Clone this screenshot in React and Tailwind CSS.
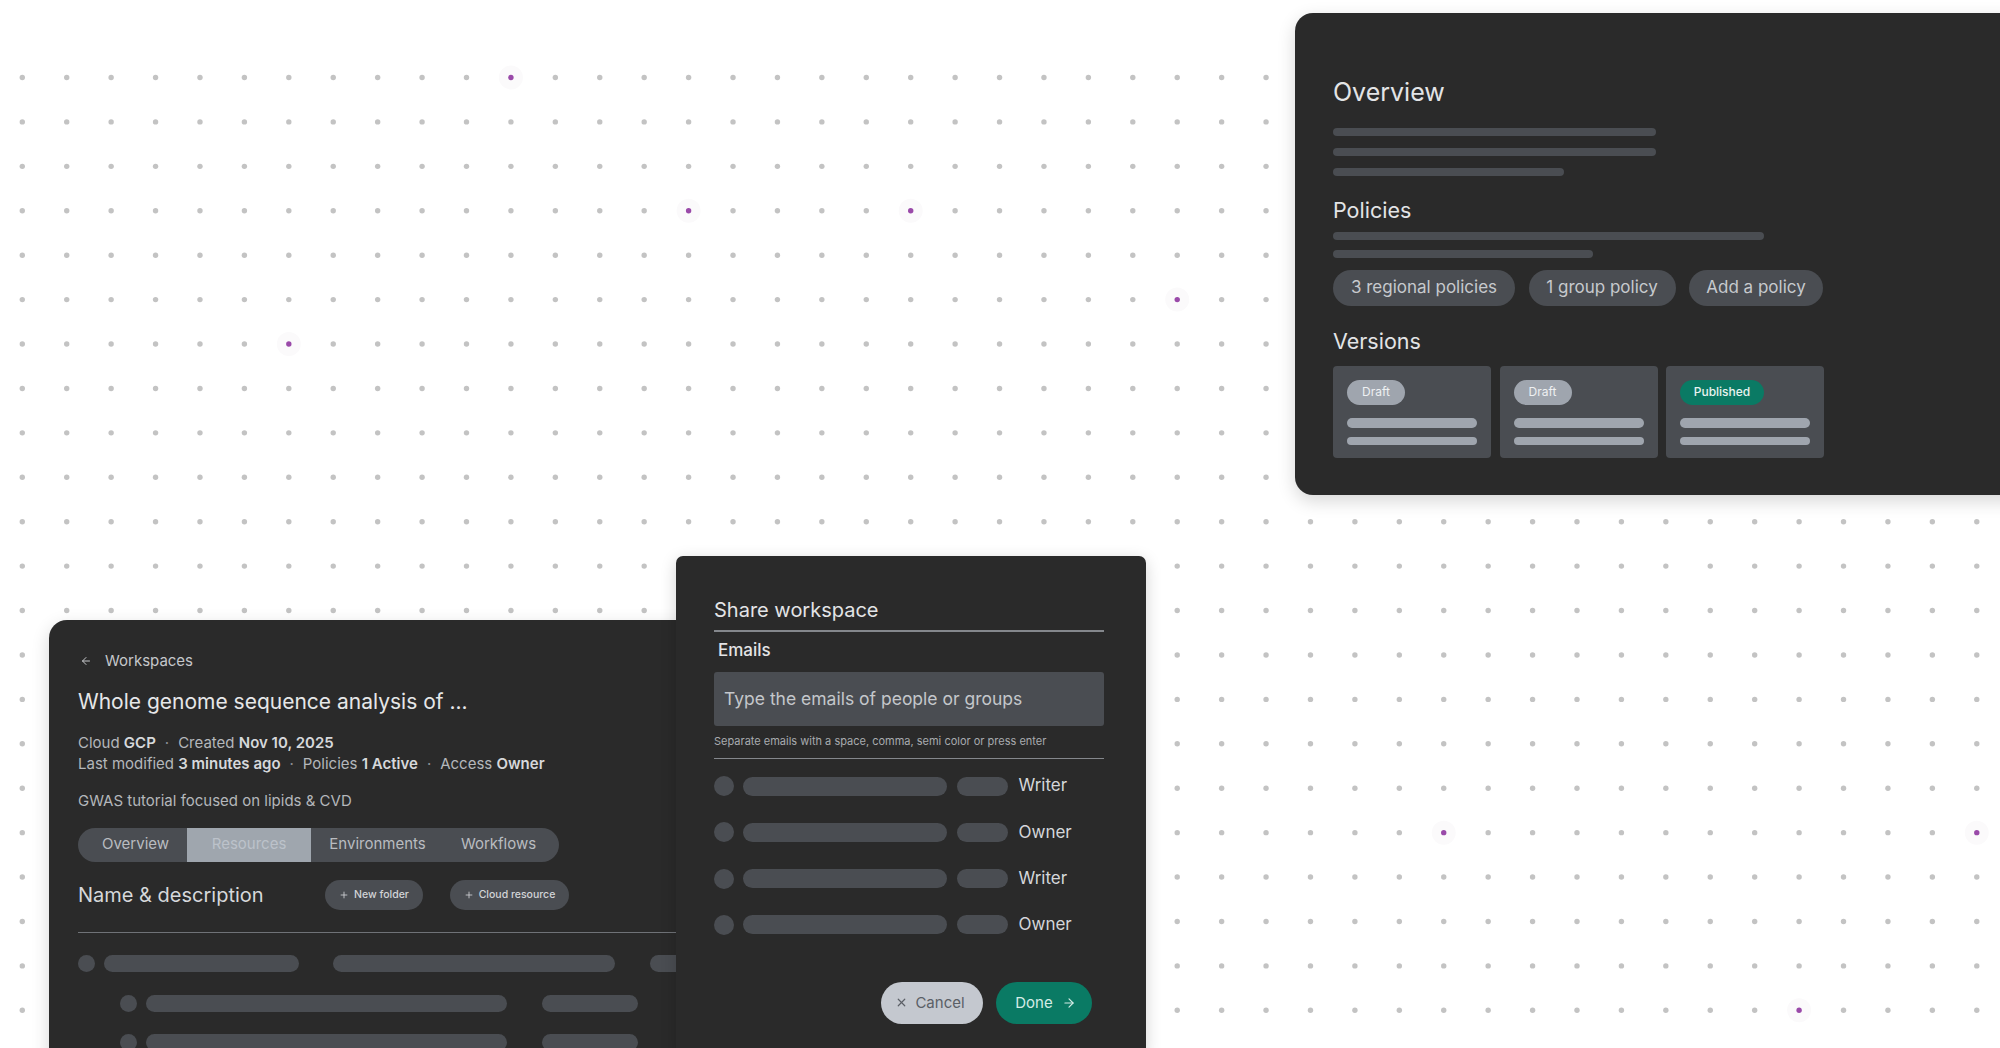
import React from "react";
import { ArrowLeft, ArrowRight, Plus, X } from "lucide-react";

// dot canvas behind the cards
const STEP = 44.42;
const X0 = 22.3;
const Y0 = 77.5;
const HIGHLIGHTS = new Set(["11,0", "15,3", "20,3", "6,6", "26,5", "32,17", "44,17", "40,21"]);

function DotGrid() {
  const dots = [];
  for (let r = 0; r < 22; r++) {
    for (let c = 0; c < 45; c++) {
      const key = `${c},${r}`;
      dots.push({ key, cx: X0 + c * STEP, cy: Y0 + r * STEP, hot: HIGHLIGHTS.has(key) });
    }
  }

  return (
    <svg className="absolute inset-0" width="2000" height="1048" viewBox="0 0 2000 1048">
      {dots
        .filter((d) => d.hot)
        .map((d) => (
          <circle key={"glow" + d.key} cx={d.cx} cy={d.cy} r={12} fill="#fbfafb" />
        ))}
      {dots.map((d) => (
        <circle key={d.key} cx={d.cx} cy={d.cy} r={2.7} fill={d.hot ? "#9a4aa9" : "#c3c3c3"} />
      ))}
    </svg>
  );
}

function VersionCard({ label, published }) {
  return (
    <div className="flex h-[92px] w-[158px] flex-col rounded-[4px] bg-[#4a4d52] px-[14px] pt-[14px]">
      <span
        className={
          published
            ? "flex h-[25px] w-[84px] items-center justify-center rounded-full bg-[#0a7a64] text-[12px] font-medium text-[#e8f3f0]"
            : "flex h-[25px] w-[58px] items-center justify-center rounded-full bg-[#9fa5ae] text-[12px] text-[#eef0f2]"
        }
      >
        {label}
      </span>
      <div className="mt-[13.5px] h-[10px] w-[130px] rounded-full bg-[#9fa5ae]" />
      <div className="mt-[9px] h-[7.5px] w-[130px] rounded-full bg-[#9fa5ae]" />
    </div>
  );
}

function OverviewPanel() {
  return (
    <section className="absolute left-[1295px] top-[13px] h-[482px] w-[740px] rounded-[18px] bg-[#2a2a2a] pl-[38px] pt-[65px] shadow-[0_6px_18px_rgba(0,0,0,0.16)]">
      <h2 className="text-[25px] leading-[28px] text-[#e3e4e6]">Overview</h2>
      <div className="mt-[22px] flex flex-col gap-[12px]">
        <div className="h-[8px] w-[323px] rounded-full bg-[#4a4d52]" />
        <div className="h-[8px] w-[323px] rounded-full bg-[#4a4d52]" />
        <div className="h-[8px] w-[231px] rounded-full bg-[#4a4d52]" />
      </div>

      <h3 className="mt-[21px] text-[21.5px] leading-[26px] text-[#e3e4e6]">Policies</h3>
      <div className="mt-[9px] flex flex-col gap-[10px]">
        <div className="h-[8px] w-[431px] rounded-full bg-[#4a4d52]" />
        <div className="h-[8px] w-[260px] rounded-full bg-[#4a4d52]" />
      </div>
      <div className="mt-[11.5px] flex gap-[13.5px] text-[17px] text-[#c6c9cd]">
        <span className="flex h-[36px] w-[182px] items-center justify-center rounded-full bg-[#4a4d52]">
          3 regional policies
        </span>
        <span className="flex h-[36px] w-[147px] items-center justify-center rounded-full bg-[#4a4d52]">
          1 group policy
        </span>
        <span className="flex h-[36px] w-[134px] items-center justify-center rounded-full bg-[#4a4d52]">
          Add a policy
        </span>
      </div>

      <h3 className="mt-[22px] text-[21.5px] leading-[26px] text-[#e3e4e6]">Versions</h3>
      <div className="mt-[12px] flex gap-[8.5px]">
        <VersionCard label="Draft" />
        <VersionCard label="Draft" />
        <VersionCard label="Published" published />
      </div>
    </section>
  );
}

function Dot() {
  return <span className="mx-[9px] text-[#8d9095]">·</span>;
}

function WorkspacePanel() {
  return (
    <section className="absolute left-[49px] top-[620px] h-[440px] w-[720px] rounded-tl-[18px] rounded-tr-[18px] bg-[#2a2a2a] pl-[29px] pt-[31px] shadow-[0_6px_18px_rgba(0,0,0,0.16)]">
      <div className="flex h-[20px] items-center text-[15px] text-[#c5c7ca]">
        <ArrowLeft className="ml-[2px] h-[12px] w-[12px] text-[#c5c7ca]" strokeWidth={2} />
        <span className="ml-[13px]">Workspaces</span>
      </div>
      <h1 className="mt-[17px] text-[21px] leading-[28px] text-[#e6e7e8]">
        Whole genome sequence analysis of ...
      </h1>

      <div className="mt-[17px] text-[15px] leading-[20.5px] text-[#b4b7bb]">
        <p>
          Cloud <b className="font-semibold text-[#d6d8db]">GCP</b>
          <Dot />
          Created <b className="font-semibold text-[#d6d8db]">Nov 10, 2025</b>
        </p>
        <p>
          Last modified <b className="font-semibold text-[#d6d8db]">3 minutes ago</b>
          <Dot />
          Policies <b className="font-semibold text-[#d6d8db]">1 Active</b>
          <Dot />
          Access <b className="font-semibold text-[#d6d8db]">Owner</b>
        </p>
      </div>
      <p className="mt-[17px] text-[15px] leading-[20.5px] text-[#b4b7bb]">GWAS tutorial focused on lipids &amp; CVD</p>

      <div className="mt-[16px] flex h-[34px] w-[481px] overflow-hidden rounded-full bg-[#4a4d52] text-[15px] text-[#b9bcc0]">
        <span className="flex w-[109px] items-center justify-center pl-[6px]">Overview</span>
        <span className="flex w-[124px] items-center justify-center bg-[#9fa6ae] text-[#bcc2ca]">Resources</span>
        <span className="flex w-[133px] items-center justify-center">Environments</span>
        <span className="flex w-[115px] items-center justify-center pr-[6px]">Workflows</span>
      </div>

      <div className="mt-[18px] flex h-[30px] items-center">
        <h2 className="w-[247px] text-[20px] text-[#d6d8db]">Name &amp; description</h2>
        <button className="flex h-[30px] w-[98px] items-center justify-center gap-[5px] rounded-full bg-[#4a4d52] text-[10.5px] font-medium text-[#d2d4d7]">
          <Plus className="h-[10px] w-[10px]" strokeWidth={2} />
          New folder
        </button>
        <button className="ml-[27px] flex h-[30px] w-[119px] items-center justify-center gap-[5px] rounded-full bg-[#4a4d52] text-[10.5px] font-medium text-[#d2d4d7]">
          <Plus className="h-[10px] w-[10px]" strokeWidth={2} />
          Cloud resource
        </button>
      </div>

      <div className="mt-[22px] h-[1.5px] w-full bg-[#6f7277]" />

      <div className="mt-[22px] flex h-[17px] items-center">
        <div className="h-[17px] w-[17px] rounded-full bg-[#4a4d52]" />
        <div className="ml-[9px] h-[17px] w-[195px] rounded-full bg-[#4a4d52]" />
        <div className="ml-[34px] h-[17px] w-[282px] rounded-full bg-[#4a4d52]" />
        <div className="ml-[35px] h-[17px] w-[90px] rounded-full bg-[#4a4d52]" />
      </div>
      <div className="mt-[22.5px] flex h-[17px] items-center pl-[42px]">
        <div className="h-[17px] w-[17px] rounded-full bg-[#4a4d52]" />
        <div className="ml-[9px] h-[17px] w-[361px] rounded-full bg-[#4a4d52]" />
        <div className="ml-[35px] h-[17px] w-[96px] rounded-full bg-[#4a4d52]" />
      </div>
      <div className="mt-[22.5px] flex h-[17px] items-center pl-[42px]">
        <div className="h-[17px] w-[17px] rounded-full bg-[#4a4d52]" />
        <div className="ml-[9px] h-[17px] w-[361px] rounded-full bg-[#4a4d52]" />
        <div className="ml-[35px] h-[17px] w-[96px] rounded-full bg-[#4a4d52]" />
      </div>
    </section>
  );
}

const members = ["Writer", "Owner", "Writer", "Owner"];

function SharePanel() {
  return (
    <section className="absolute left-[676px] top-[556px] h-[500px] w-[470px] rounded-[7px] bg-[#2a2a2a] pl-[38px] pr-[42px] pt-[41px] shadow-[0_4px_16px_rgba(0,0,0,0.18)]">
      <h2 className="text-[20px] leading-[26px] text-[#e3e4e6]">Share workspace</h2>
      <div className="mt-[7px] h-[1.5px] w-full bg-[#84878c]" />
      <p className="mt-[7px] pl-[4px] text-[17px] font-medium leading-[22px] text-[#e3e4e6]">Emails</p>
      <div className="mt-[11.5px] flex h-[54px] items-center rounded-[3px] bg-[#4a4d52] pl-[10px] text-[17.5px] text-[#c4c7cb]">
        Type the emails of people or groups
      </div>
      <p className="mt-[7.5px] text-[11px] leading-[14px] text-[#a8abaf]">
        Separate emails with a space, comma, semi color or press enter
      </p>
      <div className="mt-[10px] h-[1.5px] w-full bg-[#84878c]" />

      <div className="mt-[16px] flex flex-col gap-[24.3px]">
        {members.map((role, i) => (
          <div key={i} className="flex h-[22px] items-center">
            <div className="h-[20px] w-[20px] rounded-full bg-[#4a4d52]" />
            <div className="ml-[9px] h-[19px] w-[204px] rounded-full bg-[#4a4d52]" />
            <div className="ml-[10px] h-[19px] w-[51px] rounded-full bg-[#4a4d52]" />
            <span className="ml-[10.5px] text-[17px] text-[#d5d7da]">{role}</span>
          </div>
        ))}
      </div>

      <div className="mt-[46px] flex justify-end gap-[13.5px] pr-[12px]">
        <button className="flex h-[42px] w-[102px] items-center justify-center gap-[7px] rounded-full bg-[#c4c8cf] pr-[3px] text-[15px] text-[#5b5f66]">
          <X className="h-[13px] w-[13px]" strokeWidth={2.2} />
          Cancel
        </button>
        <button className="flex h-[42px] w-[96px] items-center justify-center gap-[9px] rounded-full bg-[#0a7a64] pl-[3px] text-[15px] text-[#d4ece6]">
          Done
          <ArrowRight className="h-[14px] w-[14px]" strokeWidth={2} />
        </button>
      </div>
    </section>
  );
}

export default function App() {
  return (
    <div className="relative h-[1048px] w-[2000px] overflow-hidden bg-white font-['Inter','Noto_Sans',sans-serif]">
      <DotGrid />
      <OverviewPanel />
      <WorkspacePanel />
      <SharePanel />
    </div>
  );
}
